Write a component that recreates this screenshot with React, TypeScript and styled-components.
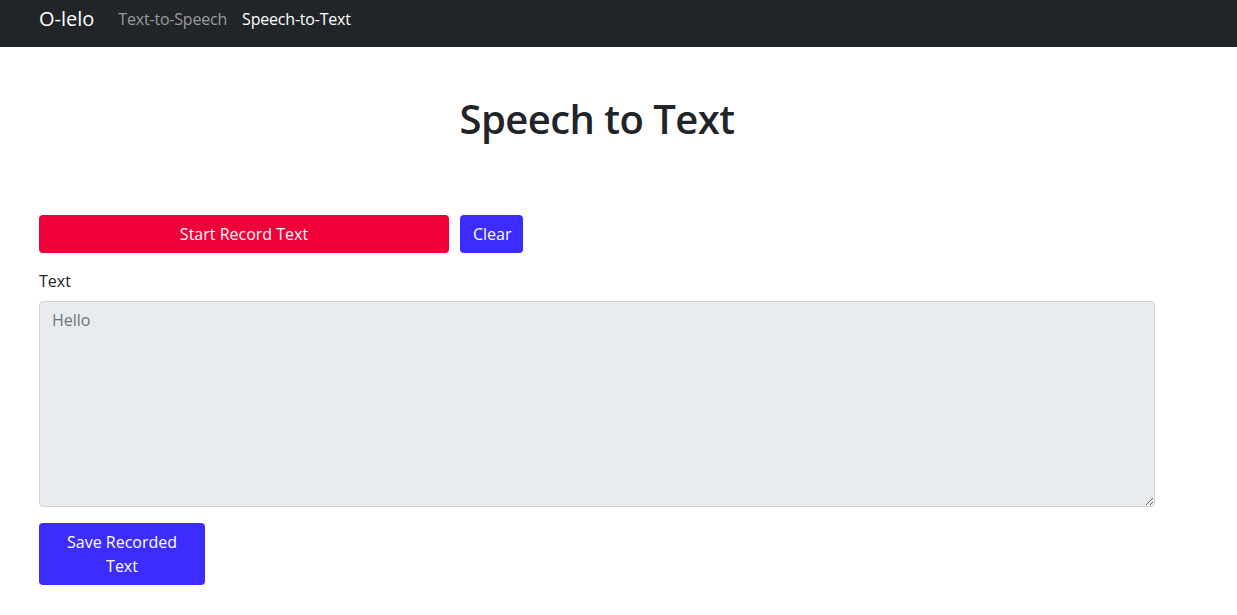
import React from "react";
import styled, { createGlobalStyle } from "styled-components";

const Global = createGlobalStyle`
  * { box-sizing: border-box; }
  body {
    margin: 0;
    font-family: "Open Sans", "Noto Sans", sans-serif;
    font-size: 16px;
    line-height: 1.5;
    color: #212529;
    background: #fff;
  }
`;

const NavBar = styled.nav`
  height: 47px;
  background: #212529;
  display: flex;
  align-items: flex-start;
  padding: 4px 39px 0;
  gap: 24px;
`;

const Brand = styled.a`
  color: #fff;
  font-size: 20px;
  line-height: 30px;
  text-decoration: none;
`;

const NavLinks = styled.div`
  display: flex;
  gap: 15px;
  padding-top: 3px;
`;

const NavLink = styled.a<{ $active?: boolean }>`
  color: ${(p) => (p.$active ? "#fff" : "rgba(255,255,255,0.55)")};
  font-size: 16px;
  line-height: 24px;
  letter-spacing: -0.2px;
  text-decoration: none;
`;

const Container = styled.main`
  width: 1116px;
  margin-left: 39px;
  display: flex;
  flex-direction: column;
`;

const Title = styled.h1`
  margin: 48px 0 72px;
  font-size: 40px;
  line-height: 48px;
  font-weight: 600;
  letter-spacing: -0.55px;
  text-align: center;
`;

const ButtonRow = styled.div`
  display: flex;
  gap: 11px;
  margin-bottom: 16px;
`;

const Button = styled.button<{ $variant: "red" | "blue"; $width?: number }>`
  font-family: inherit;
  font-size: 16px;
  line-height: 24px;
  padding: 6px 12px;
  border: 1px solid transparent;
  border-radius: 4px;
  color: #fff;
  background: ${(p) => (p.$variant === "red" ? "#ef0038" : "#3c2cff")};
  width: ${(p) => (p.$width ? `${p.$width}px` : "auto")};
  text-align: center;
  cursor: pointer;
`;

const Label = styled.label`
  display: block;
  line-height: 24px;
  margin-bottom: 8px;
`;

const TextArea = styled.textarea`
  display: block;
  width: 100%;
  height: 206px;
  font-family: inherit;
  font-size: 16px;
  line-height: 24px;
  padding: 6px 12px;
  color: #6c757d;
  background: #e9ecef;
  border: 1px solid #ced4da;
  border-radius: 4px;
  margin-bottom: 16px;
  resize: vertical;
  &::placeholder { color: #6c757d; }
`;

export default function App() {
  return (
    <>
      <Global />
      <NavBar>
        <Brand href="#">O-lelo</Brand>
        <NavLinks>
          <NavLink href="#">Text-to-Speech</NavLink>
          <NavLink href="#" $active>Speech-to-Text</NavLink>
        </NavLinks>
      </NavBar>
      <Container>
        <Title>Speech to Text</Title>
        <ButtonRow>
          <Button $variant="red" $width={410}>Start Record Text</Button>
          <Button $variant="blue" $width={63}>Clear</Button>
        </ButtonRow>
        <Label>Text</Label>
        <TextArea readOnly placeholder="Hello" />
        <div>
          <Button $variant="blue" $width={166}>Save Recorded Text</Button>
        </div>
      </Container>
    </>
  );
}
